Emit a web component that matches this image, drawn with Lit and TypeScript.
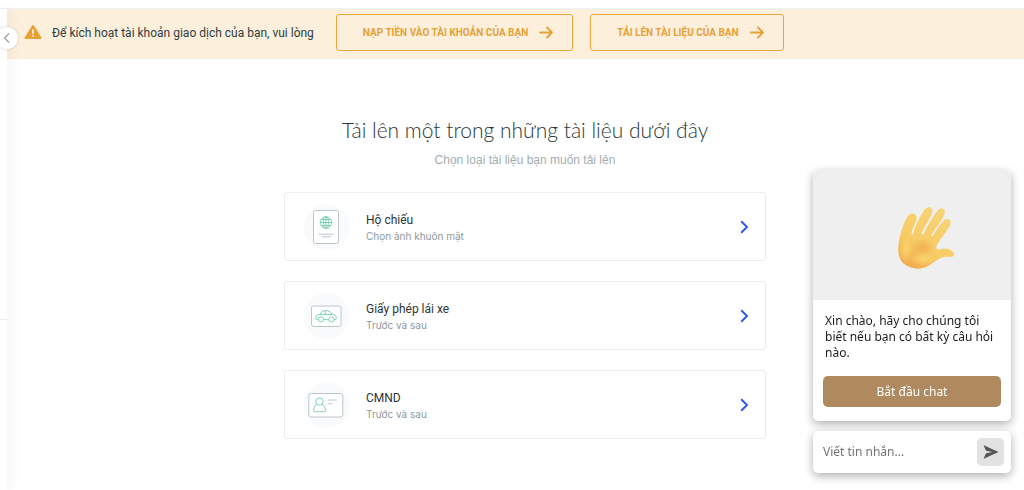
import { LitElement, html, css, svg } from "lit";
import { customElement } from "lit/decorators.js";

const arrow = html`<svg class="arrow" width="14" height="14" viewBox="0 0 14 14" aria-hidden="true">
  <path d="M1 6.500H12.600M8 1.500L13 6.500L8 11.500" />
</svg>`;

const passportArt = svg`
  <rect x="10.5" y="6.500" width="25" height="33" rx="2" class="frame" />
  <g class="green">
    <circle cx="23" cy="18.500" r="5.800" />
    <ellipse cx="23" cy="18.500" rx="2.800" ry="5.800" />
    <path d="M23 12.700V24.300M17.200 18.500H28.800M18.200 15.500H27.800M18.200 21.500H27.800" />
  </g>
  <path d="M15.500 30.200H30.500M18.500 32.800H28.200" class="frame" />`;

const licenceArt = svg`
  <rect x="8.500" y="13" width="29.500" height="20.500" rx="2" class="frame" />
  <g class="green">
    <path d="M15.200 26.600H14.200Q13 26.600 13 25.200V23.800Q13 22.400 14.600 22L16.800 21.500Q18.700 17.600 21.500 17.600H24.500Q27.200 17.600 29.200 21.500L31.500 22Q33.300 22.400 33.300 24.400V25.200Q33.300 26.600 32 26.600H31.200M20.600 26.600H25.600M16.800 21.500H29.200M22.300 17.600V21.500" />
    <circle cx="17.900" cy="26.300" r="2.600" />
    <circle cx="28.400" cy="26.300" r="2.600" />
  </g>`;

const idArt = svg`
  <rect x="5.800" y="11.500" width="34" height="23.500" rx="2.500" class="frame" />
  <g class="green">
    <circle cx="16.500" cy="19.500" r="3.700" />
    <path d="M13.700 22Q10.600 24 10.500 28.500Q10.500 29.700 11.700 29.700H21.300Q22.600 29.700 22.500 28.500Q22.400 24 19.300 22" />
  </g>
  <path d="M24.500 18H34M24.500 21.700H29.500" class="frame" />`;

const documents = [
  { title: "Hộ chiếu", note: "Chọn ảnh khuôn mặt", art: passportArt },
  { title: "Giấy phép lái xe", note: "Trước và sau", art: licenceArt },
  { title: "CMND", note: "Trước và sau", art: idArt },
];

@customElement("notice-bar")
export class NoticeBar extends LitElement {
  static styles = css`
    :host { display: block; }
    .bar {
      display: flex;
      align-items: center;
      min-height: 50px;
      box-sizing: border-box;
      padding: 5px 16px 8px 17px;
      background: #fcf0dd;
      color: #303d3f;
      font: 12px/18px Roboto, sans-serif;
    }
    .warn { flex: none; margin-right: 10px; }
    .text { margin: 0 22px 0 0; white-space: nowrap; }
    .actions { display: flex; gap: 17px; }
    button {
      display: flex;
      align-items: center;
      gap: 11px;
      height: 37px;
      padding: 0 19px 0 26px;
      border: 1px solid #e7a640;
      border-radius: 3px;
      background: transparent;
      color: #e5a136;
      font: 700 10px/16px Roboto, sans-serif;
      white-space: nowrap;
      cursor: pointer;
    }
    .arrow { fill: none; stroke: currentColor; stroke-width: 1.8; stroke-linecap: round; stroke-linejoin: round; }
  `;

  render() {
    return html`<div class="bar" role="status">
      <svg class="warn" width="18" height="18" viewBox="0 0 18 18" aria-hidden="true">
        <path d="M9 2L16.500 14H1.500Z" fill="#e5a136" stroke="#e5a136" stroke-width="2" stroke-linejoin="round" />
        <path d="M9 6V9.300M9 11.800V12.100" stroke="#fcf0dd" stroke-width="1.800" stroke-linecap="round" />
      </svg>
      <p class="text">Để kích hoạt tài khoản giao dịch của bạn, vui lòng</p>
      <div class="actions">
        <button type="button">NẠP TIỀN VÀO TÀI KHOẢN CỦA BẠN ${arrow}</button>
        <button type="button">TẢI LÊN TÀI LIỆU CỦA BẠN ${arrow}</button>
      </div>
    </div>`;
  }
}

@customElement("document-picker")
export class DocumentPicker extends LitElement {
  static styles = css`
    :host { display: block; }
    .picker {
      max-width: 482px;
      margin: 0 auto;
      padding: 54px 0 50px;
    }
    h1 {
      margin: 0;
      text-align: center;
      color: #2b3739;
      font: 300 21px/34px Lato, "Liberation Sans", sans-serif;
      white-space: nowrap;
    }
    .sub {
      margin: 4px 0 23px;
      text-align: center;
      color: #a3adb0;
      font: 12px/18px "Liberation Sans", sans-serif;
    }
    .list { display: grid; gap: 20px; }
    .card {
      display: flex;
      align-items: center;
      width: 100%;
      height: 69px;
      padding: 0 16px 0 18px;
      border: 1px solid #ebeced;
      border-radius: 3px;
      background: #fff;
      text-align: left;
      cursor: pointer;
    }
    .art { flex: none; margin-right: 16px; fill: none; }
    .frame { fill: #fff; stroke: #bcc6ca; stroke-width: 1; }
    .green { stroke: #72cbb0; stroke-width: 0.9; }
    .copy { display: grid; flex: 1; padding-top: 3px; }
    .title { color: #2b3536; font: 12px/16px Roboto, sans-serif; }
    .note { color: #8d999e; font: 10px/17px Inter, sans-serif; }
    .chev { flex: none; fill: none; stroke: #2d5be3; stroke-width: 2; }
  `;

  render() {
    return html`<section class="picker">
      <h1>Tải lên một trong những tài liệu dưới đây</h1>
      <p class="sub">Chọn loại tài liệu bạn muốn tải lên</p>
      <div class="list">
        ${documents.map(
          (d) => html`<button class="card" type="button">
            <svg class="art" width="47" height="46" viewBox="0 0 47 46" aria-hidden="true">
              <circle cx="23.500" cy="23" r="23" fill="#f8fafb" />
              ${d.art}
            </svg>
            <span class="copy">
              <span class="title">${d.title}</span>
              <span class="note">${d.note}</span>
            </span>
            <svg class="chev" width="9" height="14" viewBox="0 0 9 14" aria-hidden="true">
              <path d="M1.200 1.200L7 7L1.200 12.800" />
            </svg>
          </button>`
        )}
      </div>
    </section>`;
  }
}

@customElement("chat-widget")
export class ChatWidget extends LitElement {
  static styles = css`
    :host {
      display: grid;
      grid-template-columns: minmax(0, 1fr);
      gap: 10px;
      font: 12px/16px "Noto Sans", sans-serif;
    }
    .panel, .composer {
      border-radius: 5px;
      background: #fff;
      box-shadow: 0 3px 10px rgba(0, 0, 0, 0.32);
    }
    .panel { overflow: hidden; }
    .hero { display: flex; justify-content: center; padding: 32px 0 26px 27px; background: #efefef; }
    .body { padding: 13px 10px 14px; }
    .hello { margin: 0 2px 15px; color: #1b1b1b; }
    .start {
      display: block;
      width: 100%;
      height: 31px;
      border: 0;
      border-radius: 5px;
      background: #af8a5e;
      color: #fff;
      font: inherit;
      cursor: pointer;
    }
    .composer { display: flex; align-items: center; height: 42px; padding: 0 7px 0 10px; }
    input {
      flex: 1;
      min-width: 0;
      padding: 0;
      border: 0;
      outline: 0;
      background: transparent;
      color: #1b1b1b;
      font: inherit;
    }
    input::placeholder { color: #757575; opacity: 1; }
    .send {
      display: grid;
      place-items: center;
      width: 27px;
      height: 28px;
      padding: 0;
      border: 0;
      border-radius: 5px;
      background: #e2e2e2;
      cursor: pointer;
    }
  `;

  render() {
    return html`<div class="panel">
        <div class="hero">
          <svg width="64" height="72" viewBox="0 0 64 72" aria-hidden="true">
            <defs>
              <linearGradient id="skin" x1="0.800" y1="0" x2="0.200" y2="1">
                <stop offset="0" stop-color="#f6d578" />
                <stop offset="0.600" stop-color="#f8cc66" />
                <stop offset="1" stop-color="#f2a94f" />
              </linearGradient>
              <radialGradient id="palm">
                <stop offset="0" stop-color="#f0a94f" stop-opacity="0.750" />
                <stop offset="1" stop-color="#f0a94f" stop-opacity="0" />
              </radialGradient>
              <radialGradient id="shine">
                <stop offset="0" stop-color="#fbd66d" stop-opacity="0.900" />
                <stop offset="1" stop-color="#fbd66d" stop-opacity="0" />
              </radialGradient>
            </defs>
            <path
              fill="url(#skin)"
              d="M4.500 43C5.500 34 10 18 14.500 13.500C17 10 23 11.500 22.700 16.500C22.500 20 18.500 26 17.500 31.500C18 33 18.800 32.500 19.300 31C21.500 24 26 13.500 30 8.500C33.500 3 39.500 5 38.200 10.500C36.500 16.500 30 25 27.700 31C27.500 33 28.700 33.200 29.500 31.800C33 25 39 14 43.500 8.500C47 4 52 7 50.500 12C48 19 40.500 27 37.500 33C37.300 34.500 38.300 34.800 39.200 33.500C42 28 46.500 22 50 18.500C53.500 15 58.500 18.500 56 23C53 29.500 46 37.500 42.500 43.500C42 46 42.800 48 44.500 47.800C47 47 49.500 46.300 51.500 46.500C55.500 46.500 60.500 49.500 60 53C59.500 55.500 56 54.800 52.500 54.700C46 54.800 41 59.500 35 63.500C29 67.500 21 67.500 14.500 64.500C6.500 61 3.200 53.500 4.500 43Z"
            />
            <ellipse cx="29" cy="45" rx="12" ry="9" fill="url(#palm)" />
            <ellipse cx="12" cy="47" rx="7" ry="14" fill="url(#shine)" />
            <ellipse cx="30" cy="57" rx="14" ry="7" fill="url(#shine)" />
          </svg>
        </div>
        <div class="body">
          <p class="hello">Xin chào, hãy cho chúng tôi biết nếu bạn có bất kỳ câu hỏi nào.</p>
          <button class="start" type="button">Bắt đầu chat</button>
        </div>
      </div>
      <div class="composer">
        <input type="text" aria-label="Viết tin nhắn" placeholder="Viết tin nhắn..." />
        <button class="send" type="button" aria-label="Gửi">
          <svg width="16" height="14" viewBox="0 0 16 14" aria-hidden="true">
            <path d="M0.500 0L15.500 7L0.500 14L3 8.300L9.500 7L3 5.700Z" fill="#555" />
          </svg>
        </button>
      </div>`;
  }
}

@customElement("app-root")
export class AppRoot extends LitElement {
  static styles = css`
    :host { display: block; }
    .page {
      display: flex;
      flex-direction: column;
      min-height: 100vh;
      overflow: hidden;
      background: #fff;
    }
    .top { height: 8px; border-bottom: 1px solid #f0f1f3; }
    .row { display: flex; flex: 1; }
    .rail {
      position: relative;
      z-index: 1;
      flex: none;
      width: 7px;
      background: #fff;
      box-shadow: 2px 0 14px rgba(0, 0, 0, 0.07);
    }
    .divider { height: 0; margin: 310px 0 0; border: 0; border-top: 1px solid #ececec; }
    .toggle {
      position: absolute;
      top: 18px;
      right: -11px;
      display: grid;
      place-items: center;
      width: 22px;
      height: 22px;
      padding: 0;
      border: 0;
      border-radius: 50%;
      background: #fff;
      box-shadow: 0 0 3px rgba(0, 0, 0, 0.18);
      cursor: pointer;
    }
    .toggle svg { fill: none; stroke: #98a3a7; stroke-width: 1.3; margin-right: 2px; }
    main { flex: 1; min-width: 0; }
    .content { padding: 0 0 0 19px; }
    .chat { position: fixed; right: 13px; bottom: 17px; width: 198px; z-index: 2; }
  `;

  render() {
    return html`<div class="page">
      <div class="top"></div>
      <div class="row">
        <aside class="rail">
          <button class="toggle" type="button" aria-label="Thu gọn">
            <svg width="7" height="10" viewBox="0 0 7 10" aria-hidden="true"><path d="M6 0.500L1.500 5L6 9.500" /></svg>
          </button>
          <hr class="divider" />
        </aside>
        <main>
          <notice-bar></notice-bar>
          <div class="content"><document-picker></document-picker></div>
        </main>
      </div>
      <chat-widget class="chat"></chat-widget>
    </div>`;
  }
}
